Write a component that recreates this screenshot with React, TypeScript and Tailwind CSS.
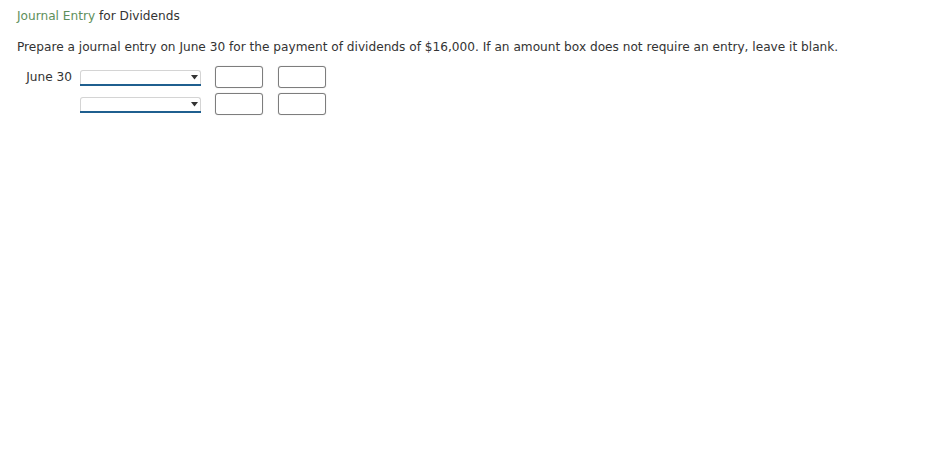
function AccountSelect() {
  return (
    <div className="relative h-[14px] w-[121px] rounded-t-[3px] border border-b-0 border-[#d4d4d4] bg-white">
      <div className="absolute -bottom-[2px] -left-px -right-px h-[2px] bg-[#1f5f8f]" />
      <svg className="absolute right-[2px] top-[4px] h-[5px] w-[7px]" viewBox="0 0 7 5" aria-hidden>
        <path d="M0 0h7L3.5 4.5z" fill="#333" />
      </svg>
    </div>
  )
}

function AmountBox() {
  return <div className="h-[22px] w-[48px] rounded-[3px] border border-[#7d7d7d] bg-white shadow-[0_0_1px_rgba(0,0,0,0.3)]" />
}

function EntryRow({ label }: { label: string }) {
  return (
    <div className="flex items-center">
      <div className="w-[63px] pr-[8px] text-right">{label}</div>
      <AccountSelect />
      <div className="ml-[14px] flex gap-[15px]">
        <AmountBox />
        <AmountBox />
      </div>
    </div>
  )
}

export default function App() {
  return (
    <div className="min-h-screen bg-white px-[17px] pt-[8px] font-['Verdana','DejaVu_Sans',sans-serif] text-[12.15px] text-[#333]">
      <h1 className="leading-[16px]">
        <span className="text-[#5e8f5b]">Journal Entry</span> for Dividends
      </h1>
      <p className="mt-[15px] leading-[16px]">
        Prepare a journal entry on June 30 for the payment of dividends of $16,000. If an amount box does not require an entry, leave it blank.
      </p>
      <div className="mt-[11px] flex flex-col gap-[5px]">
        <EntryRow label="June 30" />
        <EntryRow label="" />
      </div>
    </div>
  )
}
